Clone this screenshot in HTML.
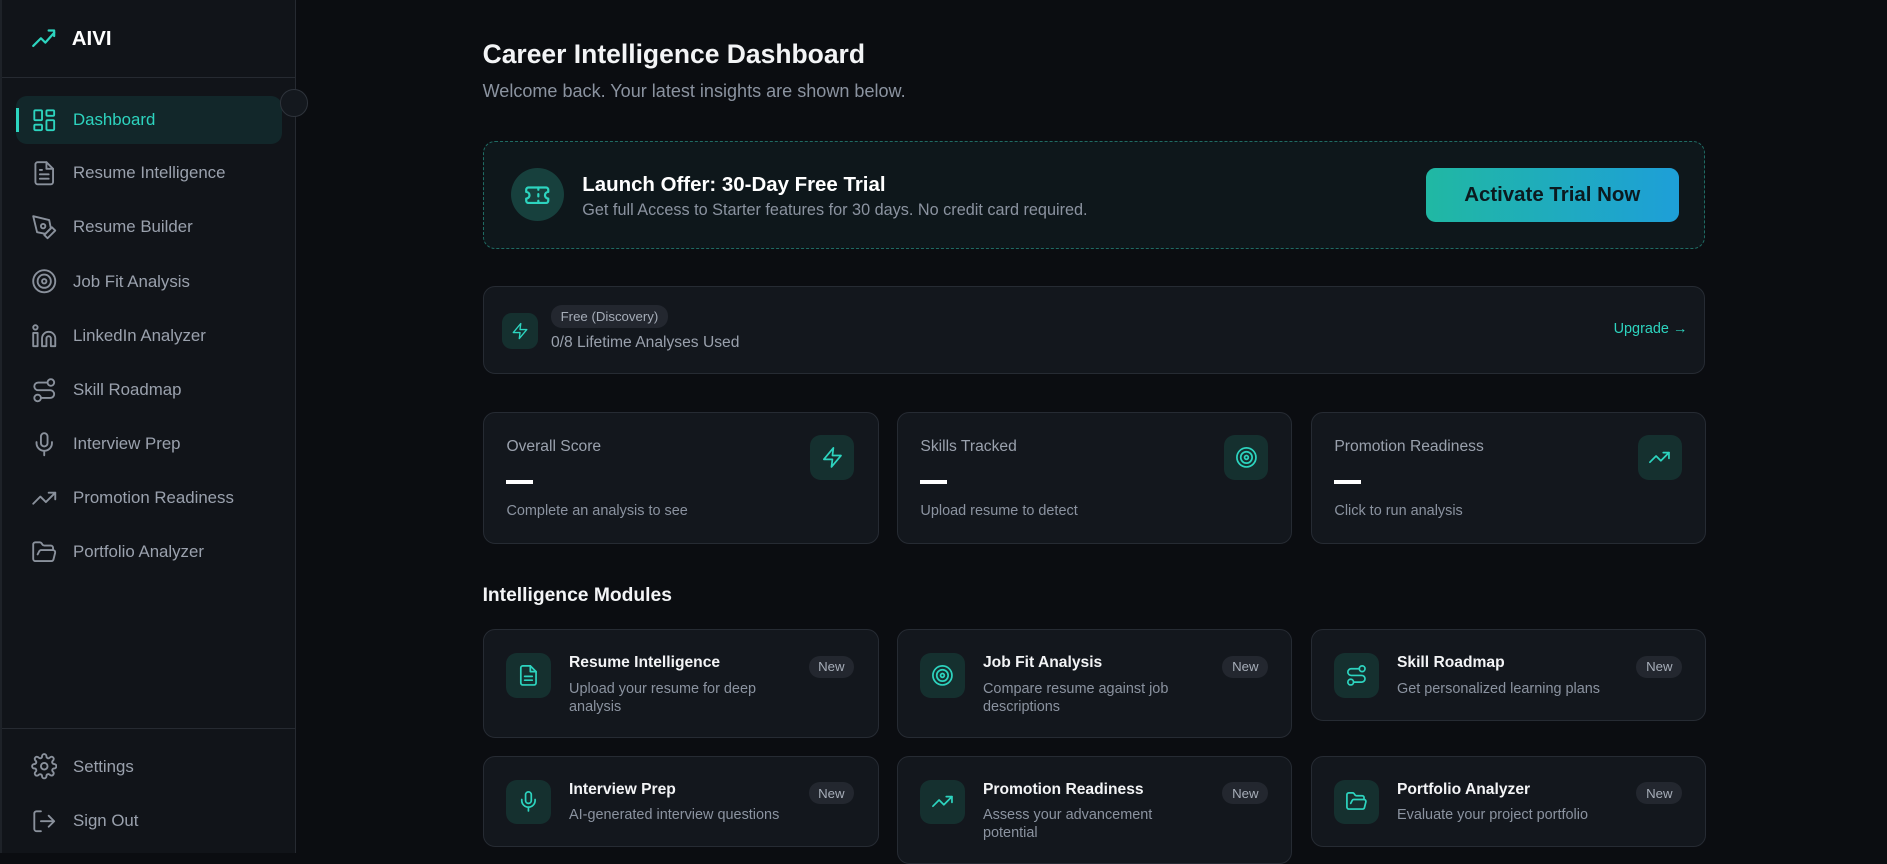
<!DOCTYPE html>
<html><head><meta charset="utf-8"><style>
html{zoom:1.20344}
*{box-sizing:border-box;margin:0;padding:0}
body{width:1568px;height:709px;overflow:hidden;background:#0b0d11;font-family:"Liberation Sans",sans-serif;color:#e8eaee;position:relative}
.sb{position:absolute;left:0;top:0;width:246px;height:709px;background:#111419;border-right:1px solid #262a31;border-left:2px solid #1e2228}
.logo{position:absolute;left:24px;top:21px;display:flex;align-items:center;gap:12px;font-weight:bold;font-size:17px;color:#fff}
.hd{position:absolute;left:0;right:0;top:64px;border-top:1px solid #262a31}
.nav{position:absolute;left:12px;width:221px;height:40px;display:flex;align-items:center;padding-left:12px;gap:13px;font-size:14px;color:#9aa1ad;border-radius:9px}
.nav svg{width:22px;height:22px;fill:none;stroke:#8a919c;stroke-width:1.7;stroke-linecap:round;stroke-linejoin:round}
.nav.act{background:#12272a;color:#2dd4bf}
.nav.act svg{stroke:#2dd4bf}
.nav.act:before{content:"";position:absolute;left:0;top:10px;width:2px;height:20px;background:#2dd4bf}
.circ{position:absolute;left:233px;top:74px;width:23px;height:23px;border-radius:50%;background:#14181e;border:1px solid #2e333b}
.main{position:absolute;left:401px;top:0;width:1016px}
h1{position:absolute;top:32px;font-size:22px;font-weight:bold;color:#f3f4f6}
.sub{position:absolute;top:67px;font-size:15px;color:#8b93a0}
.promo{position:absolute;top:117px;left:0;width:1016px;height:90px;border:1px dashed #1f6b63;border-radius:10px;background:#0e171b}
.pi{position:absolute;left:23px;top:22px;width:44px;height:44px;border-radius:50%;background:#17403d;display:flex;align-items:center;justify-content:center}
.pt{position:absolute;left:82px;top:26px;font-size:17px;font-weight:bold;color:#fff}
.ps{position:absolute;left:82px;top:49px;font-size:13.5px;color:#8b93a0}
.btn{position:absolute;left:783px;top:22px;width:210px;height:45px;border-radius:8px;background:linear-gradient(90deg,#20b8a3,#1e9fd8);color:#0b1a1f;font-size:17px;font-weight:bold;display:flex;align-items:center;justify-content:center}
.card{position:absolute;background:#13171d;border:1px solid #262b33;border-radius:10px}
.ib{position:absolute;width:37px;height:37px;border-radius:9px;background:#15302f;display:flex;align-items:center;justify-content:center}
.ib svg{width:19px;height:19px;fill:none;stroke:#2dd4bf;stroke-width:1.8;stroke-linecap:round;stroke-linejoin:round}
.badge{position:absolute;font-size:11px;color:#a6adb8;background:#23272f;border-radius:9px;padding:3px 8px}
.lbl{position:absolute;left:19px;top:21px;font-size:13px;color:#9aa1ad}
.dash{position:absolute;left:19px;top:56px;width:22px;height:3px;background:#fff}
.ss{position:absolute;left:19px;top:75px;font-size:12px;color:#8b93a0}
.mt{position:absolute;left:71px;top:20px;font-size:13px;font-weight:bold;color:#f3f4f6}
.md{position:absolute;left:71px;top:41px;font-size:12px;color:#8b93a0;line-height:15px;width:190px}
</style></head><body>
<div class="sb">
<div class="logo"><svg width="22" height="22" viewBox="0 0 24 24" fill="none" stroke="#2dd4bf" stroke-width="2" stroke-linecap="round" stroke-linejoin="round"><path d="M2 19l7-7 4 4 8-9"/><path d="M16 5h5v5"/></svg>AIVI</div>
<div class="hd"></div>
<div class="nav act" style="top:80px"><svg viewBox="0 0 24 24"><rect x="3" y="3" width="7" height="9" rx="1"/><rect x="14" y="3" width="7" height="5" rx="1"/><rect x="14" y="12" width="7" height="9" rx="1"/><rect x="3" y="16" width="7" height="5" rx="1"/></svg>Dashboard</div>
<div class="nav" style="top:124px"><svg viewBox="0 0 24 24"><path d="M14 2H6a2 2 0 0 0-2 2v16a2 2 0 0 0 2 2h12a2 2 0 0 0 2-2V8z"/><path d="M14 2v6h6M8 13h8M8 17h8M8 9h2"/></svg>Resume Intelligence</div>
<div class="nav" style="top:169px"><svg viewBox="0 0 24 24"><path d="M12 19l7-7 3 3-7 7z"/><path d="M18 13l-1.5-7.5L2 2l3.5 14.5L13 18z"/><circle cx="11" cy="11" r="2"/></svg>Resume Builder</div>
<div class="nav" style="top:214px"><svg viewBox="0 0 24 24"><circle cx="12" cy="12" r="10"/><circle cx="12" cy="12" r="6"/><circle cx="12" cy="12" r="2"/></svg>Job Fit Analysis</div>
<div class="nav" style="top:259px"><svg viewBox="0 0 24 24"><circle cx="4" cy="4" r="2"/><rect x="2" y="9" width="4" height="12"/><path d="M16 8a6 6 0 0 1 6 6v7h-4v-7a2 2 0 0 0-4 0v7h-4v-7a6 6 0 0 1 6-6z"/></svg>LinkedIn Analyzer</div>
<div class="nav" style="top:304px"><svg viewBox="0 0 24 24"><circle cx="6" cy="19" r="3"/><path d="M9 19h8.5a3.5 3.5 0 0 0 0-7h-11a3.5 3.5 0 0 1 0-7H15"/><circle cx="18" cy="5" r="3"/></svg>Skill Roadmap</div>
<div class="nav" style="top:349px"><svg viewBox="0 0 24 24"><rect x="9" y="2" width="6" height="12" rx="3"/><path d="M19 10v1a7 7 0 0 1-14 0v-1M12 18v4"/></svg>Interview Prep</div>
<div class="nav" style="top:394px"><svg viewBox="0 0 24 24"><path d="M22 7l-8.5 8.5-5-5L2 17"/><path d="M16 7h6v6"/></svg>Promotion Readiness</div>
<div class="nav" style="top:439px"><svg viewBox="0 0 24 24"><path d="M6 14l1.5-2.9A2 2 0 0 1 9.2 10H20a2 2 0 0 1 1.9 2.5l-1.5 6A2 2 0 0 1 18.5 20H4a2 2 0 0 1-2-2V5a2 2 0 0 1 2-2h3.9a2 2 0 0 1 1.7.9l.8 1.2a2 2 0 0 0 1.7.9H18a2 2 0 0 1 2 2v2"/></svg>Portfolio Analyzer</div>
<div class="hd" style="top:605px"></div>
<div class="nav" style="top:617px"><svg viewBox="0 0 24 24"><circle cx="12" cy="12" r="3"/><path d="M19.4 15a1.7 1.7 0 0 0 .3 1.8l.1.1a2 2 0 1 1-2.8 2.8l-.1-.1a1.7 1.7 0 0 0-2.9 1.2V21a2 2 0 1 1-4 0v-.1a1.7 1.7 0 0 0-2.9-1.2l-.1.1a2 2 0 1 1-2.8-2.8l.1-.1A1.7 1.7 0 0 0 3 14H3a2 2 0 1 1 0-4h.1a1.7 1.7 0 0 0 1.2-2.9l-.1-.1a2 2 0 1 1 2.8-2.8l.1.1A1.7 1.7 0 0 0 10 3V3a2 2 0 1 1 4 0v.1a1.7 1.7 0 0 0 2.9 1.2l.1-.1a2 2 0 1 1 2.8 2.8l-.1.1A1.7 1.7 0 0 0 21 10h0a2 2 0 1 1 0 4h-.1a1.7 1.7 0 0 0-1.5 1z"/></svg>Settings</div>
<div class="nav" style="top:662px"><svg viewBox="0 0 24 24"><path d="M9 21H5a2 2 0 0 1-2-2V5a2 2 0 0 1 2-2h4M16 17l5-5-5-5M21 12H9"/></svg>Sign Out</div>
</div>
<div class="circ"></div>
<div class="main">
<h1>Career Intelligence Dashboard</h1>
<div class="sub">Welcome back. Your latest insights are shown below.</div>
<div class="promo">
<div class="pi"><svg width="22" height="22" viewBox="0 0 24 24" fill="none" stroke="#2dd4bf" stroke-width="2" stroke-linecap="round" stroke-linejoin="round"><path d="M2 9a3 3 0 0 1 0 6v2a2 2 0 0 0 2 2h16a2 2 0 0 0 2-2v-2a3 3 0 0 1 0-6V7a2 2 0 0 0-2-2H4a2 2 0 0 0-2 2z"/><path d="M13 5v2M13 17v2M13 11v2"/></svg></div>
<div class="pt">Launch Offer: 30-Day Free Trial</div>
<div class="ps">Get full Access to Starter features for 30 days. No credit card required.</div>
<div class="btn">Activate Trial Now</div>
</div>
<div class="card" style="left:0;top:238px;width:1016px;height:73px">
<div class="ib" style="left:15px;top:21px;width:30px;height:30px;border-radius:8px"><svg viewBox="0 0 24 24" style="width:15px;height:15px"><path d="M13 2L3 14h9l-1 8 10-12h-9z"/></svg></div>
<div class="badge" style="left:56px;top:15px">Free (Discovery)</div>
<div style="position:absolute;left:56px;top:39px;font-size:13px;color:#9aa1ad">0/8 Lifetime Analyses Used</div>
<div style="position:absolute;right:14px;top:28px;font-size:12px;color:#2dd4bf">Upgrade →</div>
</div>
<div class="card" style="left:0;top:342px;width:329px;height:110px"><div class="lbl">Overall Score</div><div class="dash"></div><div class="ss">Complete an analysis to see</div><div class="ib" style="left:271px;top:19px"><svg viewBox="0 0 24 24"><path d="M13 2L3 14h9l-1 8 10-12h-9z"/></svg></div></div>
<div class="card" style="left:344px;top:342px;width:329px;height:110px"><div class="lbl">Skills Tracked</div><div class="dash"></div><div class="ss">Upload resume to detect</div><div class="ib" style="left:271px;top:19px"><svg viewBox="0 0 24 24"><circle cx="12" cy="12" r="10"/><circle cx="12" cy="12" r="6"/><circle cx="12" cy="12" r="2"/></svg></div></div>
<div class="card" style="left:688px;top:342px;width:329px;height:110px"><div class="lbl">Promotion Readiness</div><div class="dash"></div><div class="ss">Click to run analysis</div><div class="ib" style="left:271px;top:19px"><svg viewBox="0 0 24 24"><path d="M22 7l-8.5 8.5-5-5L2 17"/><path d="M16 7h6v6"/></svg></div></div>
<div style="position:absolute;top:486px;font-size:16px;font-weight:bold;color:#f3f4f6">Intelligence Modules</div>

<div class="card" style="left:0;top:523px;width:329px;height:90px"><div class="ib" style="left:19px;top:19px"><svg viewBox="0 0 24 24"><path d="M14 2H6a2 2 0 0 0-2 2v16a2 2 0 0 0 2 2h12a2 2 0 0 0 2-2V8z"/><path d="M14 2v6h6M8 13h8M8 17h8"/></svg></div><div class="mt">Resume Intelligence</div><div class="md">Upload your resume for deep analysis</div><div class="badge" style="left:270px;top:21px">New</div></div>
<div class="card" style="left:344px;top:523px;width:329px;height:90px"><div class="ib" style="left:19px;top:19px"><svg viewBox="0 0 24 24"><circle cx="12" cy="12" r="10"/><circle cx="12" cy="12" r="6"/><circle cx="12" cy="12" r="2"/></svg></div><div class="mt">Job Fit Analysis</div><div class="md">Compare resume against job descriptions</div><div class="badge" style="left:270px;top:21px">New</div></div>
<div class="card" style="left:688px;top:523px;width:329px;height:76px"><div class="ib" style="left:19px;top:19px"><svg viewBox="0 0 24 24"><circle cx="6" cy="19" r="3"/><path d="M9 19h8.5a3.5 3.5 0 0 0 0-7h-11a3.5 3.5 0 0 1 0-7H15"/><circle cx="18" cy="5" r="3"/></svg></div><div class="mt">Skill Roadmap</div><div class="md">Get personalized learning plans</div><div class="badge" style="left:270px;top:21px">New</div></div>

<div class="card" style="left:0;top:628px;width:329px;height:76px"><div class="ib" style="left:19px;top:19px"><svg viewBox="0 0 24 24"><rect x="9" y="2" width="6" height="12" rx="3"/><path d="M19 10v1a7 7 0 0 1-14 0v-1M12 18v4"/></svg></div><div class="mt">Interview Prep</div><div class="md">AI-generated interview questions</div><div class="badge" style="left:270px;top:21px">New</div></div>
<div class="card" style="left:344px;top:628px;width:329px;height:90px"><div class="ib" style="left:19px;top:19px"><svg viewBox="0 0 24 24"><path d="M22 7l-8.5 8.5-5-5L2 17"/><path d="M16 7h6v6"/></svg></div><div class="mt">Promotion Readiness</div><div class="md" style="width:160px">Assess your advancement potential</div><div class="badge" style="left:270px;top:21px">New</div></div>
<div class="card" style="left:688px;top:628px;width:329px;height:76px"><div class="ib" style="left:19px;top:19px"><svg viewBox="0 0 24 24"><path d="M6 14l1.5-2.9A2 2 0 0 1 9.2 10H20a2 2 0 0 1 1.9 2.5l-1.5 6A2 2 0 0 1 18.5 20H4a2 2 0 0 1-2-2V5a2 2 0 0 1 2-2h3.9a2 2 0 0 1 1.7.9l.8 1.2a2 2 0 0 0 1.7.9H18a2 2 0 0 1 2 2v2"/></svg></div><div class="mt">Portfolio Analyzer</div><div class="md">Evaluate your project portfolio</div><div class="badge" style="left:270px;top:21px">New</div></div>
</div>
</body></html>
